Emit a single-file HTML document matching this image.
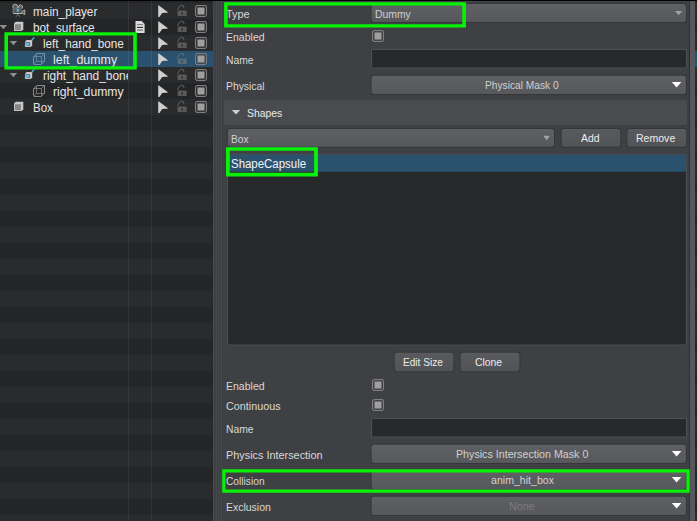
<!DOCTYPE html><html><head><meta charset='utf-8'><title>Editor</title><style>
html,body{margin:0;padding:0;background:#3f4043;}
body{width:697px;height:521px;overflow:hidden;position:relative;font-family:"Liberation Sans",sans-serif;}
#root{position:absolute;left:0;top:0;width:697px;height:521px;overflow:hidden;background:#3f4043;}
.a{position:absolute;}
.t{position:absolute;white-space:nowrap;transform-origin:0 50%;line-height:16px;height:16px;}
.tree{font-size:12px;color:#e6e6e6;}
.lbl{font-size:11px;color:#d9d9d9;}
.dd{position:absolute;box-sizing:border-box;border:1px solid #323337;border-radius:3px;background:linear-gradient(#5e5f62,#57585b);}
.btn{position:absolute;box-sizing:border-box;border:1px solid #323337;border-radius:3px;background:linear-gradient(#58595c,#525356);}
.inp{position:absolute;box-sizing:border-box;border:1px solid #4e4f52;background:#28292b;}
svg{position:absolute;left:0;top:0;overflow:visible;}
</style></head><body><div id='root'>
<div class='a' style='left:0;top:0;width:213px;height:521px;background:#242527;overflow:hidden'>
<div class='a' style='left:0;top:3px;width:213px;height:16px;background:#2a2b2d'></div>
<div class='a' style='left:0;top:19px;width:213px;height:16px;background:#242527'></div>
<div class='a' style='left:0;top:35px;width:213px;height:16px;background:#2a2b2d'></div>
<div class='a' style='left:0;top:51px;width:213px;height:16px;background:#2a526f'></div>
<div class='a' style='left:0;top:67px;width:213px;height:16px;background:#2a2b2d'></div>
<div class='a' style='left:0;top:83px;width:213px;height:16px;background:#242527'></div>
<div class='a' style='left:0;top:99px;width:213px;height:16px;background:#2a2b2d'></div>
<div class='a' style='left:0;top:115px;width:213px;height:16px;background:#242527'></div>
<div class='a' style='left:0;top:131px;width:213px;height:16px;background:#2a2b2d'></div>
<div class='a' style='left:0;top:147px;width:213px;height:16px;background:#242527'></div>
<div class='a' style='left:0;top:163px;width:213px;height:16px;background:#2a2b2d'></div>
<div class='a' style='left:0;top:179px;width:213px;height:16px;background:#242527'></div>
<div class='a' style='left:0;top:195px;width:213px;height:16px;background:#2a2b2d'></div>
<div class='a' style='left:0;top:211px;width:213px;height:16px;background:#242527'></div>
<div class='a' style='left:0;top:227px;width:213px;height:16px;background:#2a2b2d'></div>
<div class='a' style='left:0;top:243px;width:213px;height:16px;background:#242527'></div>
<div class='a' style='left:0;top:259px;width:213px;height:16px;background:#2a2b2d'></div>
<div class='a' style='left:0;top:275px;width:213px;height:16px;background:#242527'></div>
<div class='a' style='left:0;top:291px;width:213px;height:16px;background:#2a2b2d'></div>
<div class='a' style='left:0;top:307px;width:213px;height:16px;background:#242527'></div>
<div class='a' style='left:0;top:323px;width:213px;height:16px;background:#2a2b2d'></div>
<div class='a' style='left:0;top:339px;width:213px;height:16px;background:#242527'></div>
<div class='a' style='left:0;top:355px;width:213px;height:16px;background:#2a2b2d'></div>
<div class='a' style='left:0;top:371px;width:213px;height:16px;background:#242527'></div>
<div class='a' style='left:0;top:387px;width:213px;height:16px;background:#2a2b2d'></div>
<div class='a' style='left:0;top:403px;width:213px;height:16px;background:#242527'></div>
<div class='a' style='left:0;top:419px;width:213px;height:16px;background:#2a2b2d'></div>
<div class='a' style='left:0;top:435px;width:213px;height:16px;background:#242527'></div>
<div class='a' style='left:0;top:451px;width:213px;height:16px;background:#2a2b2d'></div>
<div class='a' style='left:0;top:467px;width:213px;height:16px;background:#242527'></div>
<div class='a' style='left:0;top:483px;width:213px;height:16px;background:#2a2b2d'></div>
<div class='a' style='left:0;top:499px;width:213px;height:16px;background:#242527'></div>
<div class='a' style='left:0;top:515px;width:213px;height:16px;background:#2a2b2d'></div>
<div class='a' style='left:128px;top:1px;width:1px;height:520px;background:rgba(255,255,255,0.07)'></div>
<div class='a' style='left:151px;top:1px;width:1px;height:520px;background:rgba(255,255,255,0.07)'></div>
</div>
<div class='a' style='left:695px;top:0;width:2px;height:521px;background:#242527'></div>
<div class='a' style='left:695px;top:3px;width:2px;height:16px;background:#2a2b2d'></div>
<div class='a' style='left:695px;top:19px;width:2px;height:16px;background:#242527'></div>
<div class='a' style='left:695px;top:35px;width:2px;height:16px;background:#2a2b2d'></div>
<div class='a' style='left:695px;top:51px;width:2px;height:16px;background:#2a526f'></div>
<div class='a' style='left:695px;top:67px;width:2px;height:16px;background:#2a2b2d'></div>
<div class='a' style='left:695px;top:83px;width:2px;height:16px;background:#242527'></div>
<div class='a' style='left:695px;top:99px;width:2px;height:16px;background:#2a2b2d'></div>
<div class='a' style='left:695px;top:115px;width:2px;height:16px;background:#242527'></div>
<div class='a' style='left:695px;top:131px;width:2px;height:16px;background:#2a2b2d'></div>
<div class='a' style='left:695px;top:147px;width:2px;height:16px;background:#242527'></div>
<div class='a' style='left:695px;top:163px;width:2px;height:16px;background:#2a2b2d'></div>
<div class='a' style='left:695px;top:179px;width:2px;height:16px;background:#242527'></div>
<div class='a' style='left:695px;top:195px;width:2px;height:16px;background:#2a2b2d'></div>
<div class='a' style='left:695px;top:211px;width:2px;height:16px;background:#242527'></div>
<div class='a' style='left:695px;top:227px;width:2px;height:16px;background:#2a2b2d'></div>
<div class='a' style='left:695px;top:243px;width:2px;height:16px;background:#242527'></div>
<div class='a' style='left:695px;top:259px;width:2px;height:16px;background:#2a2b2d'></div>
<div class='a' style='left:695px;top:275px;width:2px;height:16px;background:#242527'></div>
<div class='a' style='left:695px;top:291px;width:2px;height:16px;background:#2a2b2d'></div>
<div class='a' style='left:695px;top:307px;width:2px;height:16px;background:#242527'></div>
<div class='a' style='left:695px;top:323px;width:2px;height:16px;background:#2a2b2d'></div>
<div class='a' style='left:695px;top:339px;width:2px;height:16px;background:#242527'></div>
<div class='a' style='left:695px;top:355px;width:2px;height:16px;background:#2a2b2d'></div>
<div class='a' style='left:695px;top:371px;width:2px;height:16px;background:#242527'></div>
<div class='a' style='left:695px;top:387px;width:2px;height:16px;background:#2a2b2d'></div>
<div class='a' style='left:695px;top:403px;width:2px;height:16px;background:#242527'></div>
<div class='a' style='left:695px;top:419px;width:2px;height:16px;background:#2a2b2d'></div>
<div class='a' style='left:695px;top:435px;width:2px;height:16px;background:#242527'></div>
<div class='a' style='left:695px;top:451px;width:2px;height:16px;background:#2a2b2d'></div>
<div class='a' style='left:695px;top:467px;width:2px;height:16px;background:#242527'></div>
<div class='a' style='left:695px;top:483px;width:2px;height:16px;background:#2a2b2d'></div>
<div class='a' style='left:695px;top:499px;width:2px;height:16px;background:#242527'></div>
<div class='a' style='left:695px;top:515px;width:2px;height:16px;background:#2a2b2d'></div>
<div class='a' style='left:689px;top:0;width:1px;height:521px;background:#2f3033'></div>
<div class='a' style='left:690px;top:0;width:5px;height:521px;background:#56575a'></div>
<div class='a' style='left:213px;top:0;width:9px;height:521px;background:linear-gradient(90deg,#47484b 0 1px,#404144 1px 3px,#494a4d 3px 4px,#3a3b3e 4px 5px,#47484b 5px 6px,#404144 6px 8px,#47484b 8px 9px)'></div>
<div class='t tree' style='left:32.6px;top:4.0px;transform:scaleX(0.9847);'>main_player</div>
<div class='t tree' style='left:32.6px;top:20.0px;transform:scaleX(0.9825);'>bot_surface</div>
<div class='t tree' style='left:42.9px;top:36.0px;transform:scaleX(0.9758);'>left_hand_bone</div>
<div class='t tree' style='left:52.9px;top:52.0px;transform:scaleX(1.0339);'>left_dummy</div>
<div class='a' style='left:0;top:67px;width:128px;height:17px;overflow:hidden'>
<div class='t tree' style='left:42.8px;top:1px;transform:scaleX(0.9911)'>right_hand_bone</div>
</div>
<div class='t tree' style='left:52.5px;top:84.0px;transform:scaleX(1.0187);'>right_dummy</div>
<div class='t tree' style='left:32.6px;top:100.0px;transform:scaleX(0.9565);'>Box</div>
<svg width='697' height='521' viewBox='0 0 697 521'>
<polygon points='-0.4,25.0 7.1,25.0 3.4,29.3' fill='#8c8c8c'/>
<polygon points='9.7,41.0 17.2,41.0 13.4,45.3' fill='#8c8c8c'/>
<polygon points='9.7,73.0 17.2,73.0 13.4,77.3' fill='#8c8c8c'/>
<g><circle cx='15.2' cy='6.6' r='2.4' fill='#5a5a5a' stroke='#bcbcbc' stroke-width='0.9'/><circle cx='20.5' cy='7' r='2' fill='#5a5a5a' stroke='#bcbcbc' stroke-width='0.9'/><rect x='13' y='8.3' width='8.9' height='5' fill='#565656'/><rect x='12.7' y='8.6' width='0.7' height='4.6' fill='#9a9a9a'/><rect x='13.2' y='13' width='8.6' height='0.9' fill='#c6c6c6'/><polygon points='22.2,11.4 24.8,9.9 24.8,14.7 22.2,13.2' fill='#5a5a5a' stroke='#c4c4c4' stroke-width='0.8'/><polygon points='16.8,8.1 19.6,10.2 16.8,12.3' fill='#4fc3f0'/><path d='M17.8,14 L16,16.8 M17.8,14 L19.8,16.8' stroke='#777' stroke-width='0.8' fill='none'/></g>
<g transform='translate(14.0,21.8)'><polygon points='0,1.7 1.7,0 9.3,0 9.3,7.5 7.6,9.2 0,9.2' fill='#c8c8c8'/><rect x='0.9' y='2.4' width='6' height='6' fill='#878787'/></g>
<g transform='translate(14.0,101.8)'><polygon points='0,1.7 1.7,0 9.3,0 9.3,7.5 7.6,9.2 0,9.2' fill='#c8c8c8'/><rect x='0.9' y='2.4' width='6' height='6' fill='#878787'/></g>
<g transform='translate(24.2,40.0)'><polygon points='1,1.4 2.4,0 8,0 8,5.6 6.6,7 1,7' fill='#c8c8c8'/><rect x='1.9' y='2.1' width='4' height='4' fill='#6e6e6e'/><polygon points='0,5.6 2.2,3 5.6,3 4,5.8' fill='#4fc3f0'/><path d='M7.2,0.6 L10,-2.6' stroke='#4fc3f0' stroke-width='1.3' fill='none'/></g>
<g transform='translate(24.2,72.0)'><polygon points='1,1.4 2.4,0 8,0 8,5.6 6.6,7 1,7' fill='#c8c8c8'/><rect x='1.9' y='2.1' width='4' height='4' fill='#6e6e6e'/><polygon points='0,5.6 2.2,3 5.6,3 4,5.8' fill='#4fc3f0'/><path d='M7.2,0.6 L10,-2.6' stroke='#4fc3f0' stroke-width='1.3' fill='none'/></g>
<g transform='translate(33.0,53.0)' fill='none' stroke='#7391a6' stroke-width='1'><path d='M0.5,3.8 L3.8,0.5 L11.5,0.5 L11.5,8.2 L8.2,11.5 L1.5,11.5 Q0.5,11.5 0.5,10.5 Z'/><path d='M3.5,0.8 V8.5 H11.2 M0.8,3.5 H8.5 V11.2 M8.5,3.5 L11.3,0.7 M0.8,11.2 L3.5,8.5' stroke-opacity='0.75'/></g>
<g transform='translate(33.0,85.0)' fill='none' stroke='#8a8a8a' stroke-width='1'><path d='M0.5,3.8 L3.8,0.5 L11.5,0.5 L11.5,8.2 L8.2,11.5 L1.5,11.5 Q0.5,11.5 0.5,10.5 Z'/><path d='M3.5,0.8 V8.5 H11.2 M0.8,3.5 H8.5 V11.2 M8.5,3.5 L11.3,0.7 M0.8,11.2 L3.5,8.5' stroke-opacity='0.75'/></g>
<g><polygon points='135.5,21 141.6,21 144.6,24 144.6,33 135.5,33' fill='#dcdcdc'/><rect x='137' y='24.1' width='6' height='1' fill='#777'/><rect x='137' y='26.9' width='6' height='1' fill='#222'/><rect x='137' y='29.4' width='6' height='1.5' fill='#888'/></g>
<polygon points='158.2,5.0 168.3,12.6 162.2,13.0 159.4,17.0 158.2,17.0' fill='#cfcfcf'/>
<rect x='177.7' y='10.6' width='8.9' height='5.3' fill='#5c5c5c'/>
<circle cx='182.1' cy='13.4' r='1' fill='#242527'/>
<path d='M177.7,10.2 C178,7.6 180,5.3 181.6,5.3 C183,5.3 183.8,6.4 184,7.9' stroke='#5c5c5c' stroke-width='1.1' fill='none'/>
<polygon points='158.2,21.0 168.3,28.6 162.2,29.0 159.4,33.0 158.2,33.0' fill='#cfcfcf'/>
<rect x='177.7' y='26.6' width='8.9' height='5.3' fill='#5c5c5c'/>
<circle cx='182.1' cy='29.4' r='1' fill='#242527'/>
<path d='M177.7,26.2 C178,23.6 180,21.3 181.6,21.3 C183,21.3 183.8,22.4 184,23.9' stroke='#5c5c5c' stroke-width='1.1' fill='none'/>
<polygon points='158.2,37.0 168.3,44.6 162.2,45.0 159.4,49.0 158.2,49.0' fill='#cfcfcf'/>
<rect x='177.7' y='42.6' width='8.9' height='5.3' fill='#5c5c5c'/>
<circle cx='182.1' cy='45.4' r='1' fill='#242527'/>
<path d='M177.7,42.2 C178,39.6 180,37.3 181.6,37.3 C183,37.3 183.8,38.4 184,39.9' stroke='#5c5c5c' stroke-width='1.1' fill='none'/>
<polygon points='158.2,53.0 168.3,60.6 162.2,61.0 159.4,65.0 158.2,65.0' fill='#cfcfcf'/>
<rect x='177.7' y='58.6' width='8.9' height='5.3' fill='#5a6b78'/>
<circle cx='182.1' cy='61.4' r='1' fill='#24465f'/>
<path d='M177.7,58.2 C178,55.6 180,53.3 181.6,53.3 C183,53.3 183.8,54.4 184,55.9' stroke='#5a6b78' stroke-width='1.1' fill='none'/>
<polygon points='158.2,69.0 168.3,76.6 162.2,77.0 159.4,81.0 158.2,81.0' fill='#cfcfcf'/>
<rect x='177.7' y='74.6' width='8.9' height='5.3' fill='#5c5c5c'/>
<circle cx='182.1' cy='77.4' r='1' fill='#242527'/>
<path d='M177.7,74.2 C178,71.6 180,69.3 181.6,69.3 C183,69.3 183.8,70.4 184,71.9' stroke='#5c5c5c' stroke-width='1.1' fill='none'/>
<polygon points='158.2,85.0 168.3,92.6 162.2,93.0 159.4,97.0 158.2,97.0' fill='#cfcfcf'/>
<rect x='177.7' y='90.6' width='8.9' height='5.3' fill='#5c5c5c'/>
<circle cx='182.1' cy='93.4' r='1' fill='#242527'/>
<path d='M177.7,90.2 C178,87.6 180,85.3 181.6,85.3 C183,85.3 183.8,86.4 184,87.9' stroke='#5c5c5c' stroke-width='1.1' fill='none'/>
<polygon points='158.2,101.0 168.3,108.6 162.2,109.0 159.4,113.0 158.2,113.0' fill='#cfcfcf'/>
<rect x='177.7' y='106.6' width='8.9' height='5.3' fill='#5c5c5c'/>
<circle cx='182.1' cy='109.4' r='1' fill='#242527'/>
<path d='M177.7,106.2 C178,103.6 180,101.3 181.6,101.3 C183,101.3 183.8,102.4 184,103.9' stroke='#5c5c5c' stroke-width='1.1' fill='none'/>
</svg>
<svg width='12' height='12' viewBox='0 0 12 12' style='left:195.0px;top:5.0px'><rect x='0.6' y='0.6' width='10.8' height='10.8' rx='1.8' fill='rgba(0,0,0,0.33)' stroke='#808082' stroke-width='1.2'/><rect x='2.4' y='2.4' width='7.2' height='7.2' fill='#a09e9f'/></svg>
<svg width='12' height='12' viewBox='0 0 12 12' style='left:195.0px;top:21.0px'><rect x='0.6' y='0.6' width='10.8' height='10.8' rx='1.8' fill='rgba(0,0,0,0.33)' stroke='#808082' stroke-width='1.2'/><rect x='2.4' y='2.4' width='7.2' height='7.2' fill='#a09e9f'/></svg>
<svg width='12' height='12' viewBox='0 0 12 12' style='left:195.0px;top:37.0px'><rect x='0.6' y='0.6' width='10.8' height='10.8' rx='1.8' fill='rgba(0,0,0,0.33)' stroke='#808082' stroke-width='1.2'/><rect x='2.4' y='2.4' width='7.2' height='7.2' fill='#a09e9f'/></svg>
<svg width='12' height='12' viewBox='0 0 12 12' style='left:195.0px;top:53.0px'><rect x='0.6' y='0.6' width='10.8' height='10.8' rx='1.8' fill='rgba(0,0,0,0.33)' stroke='#808082' stroke-width='1.2'/><rect x='2.4' y='2.4' width='7.2' height='7.2' fill='#a09e9f'/></svg>
<svg width='12' height='12' viewBox='0 0 12 12' style='left:195.0px;top:69.0px'><rect x='0.6' y='0.6' width='10.8' height='10.8' rx='1.8' fill='rgba(0,0,0,0.33)' stroke='#808082' stroke-width='1.2'/><rect x='2.4' y='2.4' width='7.2' height='7.2' fill='#a09e9f'/></svg>
<svg width='12' height='12' viewBox='0 0 12 12' style='left:195.0px;top:85.0px'><rect x='0.6' y='0.6' width='10.8' height='10.8' rx='1.8' fill='rgba(0,0,0,0.33)' stroke='#808082' stroke-width='1.2'/><rect x='2.4' y='2.4' width='7.2' height='7.2' fill='#a09e9f'/></svg>
<svg width='12' height='12' viewBox='0 0 12 12' style='left:195.0px;top:101.0px'><rect x='0.6' y='0.6' width='10.8' height='10.8' rx='1.8' fill='rgba(0,0,0,0.33)' stroke='#808082' stroke-width='1.2'/><rect x='2.4' y='2.4' width='7.2' height='7.2' fill='#a09e9f'/></svg>
<svg width='697' height='521' viewBox='0 0 697 521'><defs><linearGradient id='gdd' x1='0' y1='0' x2='0' y2='1'><stop offset='0' stop-color='#5f6063'/><stop offset='1' stop-color='#57585b'/></linearGradient><linearGradient id='gbtn' x1='0' y1='0' x2='0' y2='1'><stop offset='0' stop-color='#595a5d'/><stop offset='1' stop-color='#525356'/></linearGradient></defs><rect x='370.60' y='3.00' width='316.30' height='20.10' rx='3.2' fill='#35363a'/><rect x='371.60' y='4.00' width='314.30' height='18.10' rx='2.4' fill='url(#gdd)'/><rect x='371.00' y='48.90' width='316.10' height='19.70' rx='1.5' fill='#4e4f52'/><rect x='372.10' y='50.00' width='313.90' height='17.50' rx='0.5' fill='#28292b'/><rect x='370.60' y='74.70' width='316.30' height='20.40' rx='3.2' fill='#35363a'/><rect x='371.60' y='75.70' width='314.30' height='18.40' rx='2.4' fill='url(#gdd)'/><rect x='223.8' y='100' width='463.2' height='25.1' rx='3' fill='#4a4b4e'/><rect x='226.90' y='128.10' width='328.10' height='19.60' rx='3.2' fill='#35363a'/><rect x='227.90' y='129.10' width='326.10' height='17.60' rx='2.4' fill='url(#gdd)'/><rect x='560.60' y='128.10' width='60.70' height='19.70' rx='3.2' fill='#35363a'/><rect x='561.60' y='129.10' width='58.70' height='17.70' rx='2.4' fill='url(#gbtn)'/><rect x='626.50' y='128.10' width='60.70' height='19.70' rx='3.2' fill='#35363a'/><rect x='627.50' y='129.10' width='58.70' height='17.70' rx='2.4' fill='url(#gbtn)'/><rect x='227.00' y='153.80' width='460.00' height='191.70' rx='2.5' fill='#4c4d50'/><rect x='228.10' y='154.90' width='457.80' height='189.50' rx='1.5' fill='#28292b'/><rect x='228.1' y='154.8' width='457.8' height='16.9' fill='#2a526f'/><rect x='393.70' y='351.80' width='60.70' height='20.40' rx='3.2' fill='#35363a'/><rect x='394.70' y='352.80' width='58.70' height='18.40' rx='2.4' fill='url(#gbtn)'/><rect x='459.60' y='351.80' width='60.80' height='20.40' rx='3.2' fill='#35363a'/><rect x='460.60' y='352.80' width='58.80' height='18.40' rx='2.4' fill='url(#gbtn)'/><rect x='371.00' y='418.00' width='316.10' height='19.60' rx='1.5' fill='#4e4f52'/><rect x='372.10' y='419.10' width='313.90' height='17.40' rx='0.5' fill='#28292b'/><rect x='370.60' y='443.80' width='316.30' height='20.30' rx='3.2' fill='#35363a'/><rect x='371.60' y='444.80' width='314.30' height='18.30' rx='2.4' fill='url(#gdd)'/><rect x='370.60' y='469.80' width='316.30' height='20.30' rx='3.2' fill='#35363a'/><rect x='371.60' y='470.80' width='314.30' height='18.30' rx='2.4' fill='url(#gdd)'/><rect x='370.60' y='495.80' width='316.30' height='20.30' rx='3.2' fill='#35363a'/><rect x='371.60' y='496.80' width='314.30' height='18.30' rx='2.4' fill='url(#gdd)'/></svg>
<div class='t lbl' style='left:226.2px;top:6.0px;transform:scaleX(0.9916);'>Type</div>
<div class='t lbl' style='left:375.3px;top:6.0px;transform:scaleX(0.9420);color:#cfcfcf;'>Dummy</div>
<div class='t lbl' style='left:226.0px;top:28.5px;transform:scaleX(0.9554);'>Enabled</div>
<div class='t lbl' style='left:226.0px;top:52.0px;transform:scaleX(0.9386);'>Name</div>
<div class='t lbl' style='left:226.0px;top:77.5px;transform:scaleX(0.9415);'>Physical</div>
<div class='t lbl' style='left:485.4px;top:76.5px;transform:scaleX(0.9270);color:#d0d0d0;'>Physical Mask 0</div>
<div class='t lbl' style='left:247.4px;top:104.5px;transform:scaleX(0.9437);color:#ececec;'>Shapes</div>
<div class='t lbl' style='left:231.2px;top:130.6px;transform:scaleX(0.9263);color:#cfcfcf;'>Box</div>
<div class='t lbl' style='left:581.0px;top:129.5px;transform:scaleX(0.9439);color:#ececec;'>Add</div>
<div class='t lbl' style='left:636.1px;top:129.5px;transform:scaleX(0.9585);color:#ececec;'>Remove</div>
<div class='t lbl' style='left:230.9px;top:156.4px;transform:scaleX(0.9530);color:#f4f4f4;font-size:12px;'>ShapeCapsule</div>
<div class='t lbl' style='left:403.3px;top:354.0px;transform:scaleX(0.9171);color:#ececec;'>Edit Size</div>
<div class='t lbl' style='left:475.4px;top:354.0px;transform:scaleX(0.9375);color:#ececec;'>Clone</div>
<div class='t lbl' style='left:226.0px;top:377.5px;transform:scaleX(0.9554);'>Enabled</div>
<div class='t lbl' style='left:226.0px;top:397.5px;transform:scaleX(0.9803);'>Continuous</div>
<div class='t lbl' style='left:226.0px;top:421.0px;transform:scaleX(0.9386);'>Name</div>
<div class='t lbl' style='left:226.0px;top:447.0px;transform:scaleX(0.9877);'>Physics Intersection</div>
<div class='t lbl' style='left:456.1px;top:445.5px;transform:scaleX(0.9707);color:#d0d0d0;'>Physics Intersection Mask 0</div>
<div class='t lbl' style='left:226.0px;top:473.0px;transform:scaleX(0.9279);'>Collision</div>
<div class='t lbl' style='left:490.7px;top:471.5px;transform:scaleX(0.9633);color:#d0d0d0;'>anim_hit_box</div>
<div class='t lbl' style='left:226.0px;top:498.5px;transform:scaleX(0.9512);'>Exclusion</div>
<div class='t lbl' style='left:509.2px;top:497.5px;transform:scaleX(0.9696);color:#7b7c7f;'>None</div>
<svg width='12' height='12' viewBox='0 0 12 12' style='left:372.0px;top:30.0px'><rect x='0.6' y='0.6' width='10.8' height='10.8' rx='1.8' fill='rgba(0,0,0,0.25)' stroke='#808082' stroke-width='1.2'/><rect x='2.4' y='2.4' width='7.2' height='7.2' fill='#a09e9f'/></svg>
<svg width='12' height='12' viewBox='0 0 12 12' style='left:372.0px;top:379.0px'><rect x='0.6' y='0.6' width='10.8' height='10.8' rx='1.8' fill='rgba(0,0,0,0.25)' stroke='#808082' stroke-width='1.2'/><rect x='2.4' y='2.4' width='7.2' height='7.2' fill='#a09e9f'/></svg>
<svg width='12' height='12' viewBox='0 0 12 12' style='left:372.0px;top:399.0px'><rect x='0.6' y='0.6' width='10.8' height='10.8' rx='1.8' fill='rgba(0,0,0,0.25)' stroke='#808082' stroke-width='1.2'/><rect x='2.4' y='2.4' width='7.2' height='7.2' fill='#a09e9f'/></svg>
<svg width='697' height='521' viewBox='0 0 697 521'>
<polygon points='675.0,11.0 682.2,11.0 678.6,15.2' fill='#a2a2a2'/>
<polygon points='543.2,135.8 550.0,135.8 546.6,140.2' fill='#a2a2a2'/>
<polygon points='671.8,82.0 681.4,82.0 676.6,87.4' fill='#ffffff'/>
<polygon points='671.8,451.0 681.4,451.0 676.6,456.4' fill='#ffffff'/>
<polygon points='671.8,477.0 681.4,477.0 676.6,482.4' fill='#ffffff'/>
<polygon points='671.8,503.0 681.4,503.0 676.6,508.4' fill='#ffffff'/>
<polygon points='231.8,110.0 240.2,110.0 236.0,114.5' fill='#cfcfd2'/>
<path fill-rule='evenodd' fill='#08f208' d='M4.40,32.30 H136.80 V69.50 H4.40 Z M8.00,35.50 H133.20 V66.30 H8.00 Z'/>
<path fill-rule='evenodd' fill='#08f208' d='M224.10,2.30 H465.90 V27.50 H224.10 Z M227.70,5.50 H462.30 V24.30 H227.70 Z'/>
<path fill-rule='evenodd' fill='#08f208' d='M226.00,147.20 H317.90 V176.40 H226.00 Z M229.80,150.80 H314.10 V172.80 H229.80 Z'/>
<path fill-rule='evenodd' fill='#08f208' d='M222.20,469.30 H689.70 V492.70 H222.20 Z M225.50,472.60 H686.40 V489.40 H225.50 Z'/>
</svg>
<div class='a' style='left:0;top:0;width:697px;height:1px;background:#000'></div>
</div></body></html>
